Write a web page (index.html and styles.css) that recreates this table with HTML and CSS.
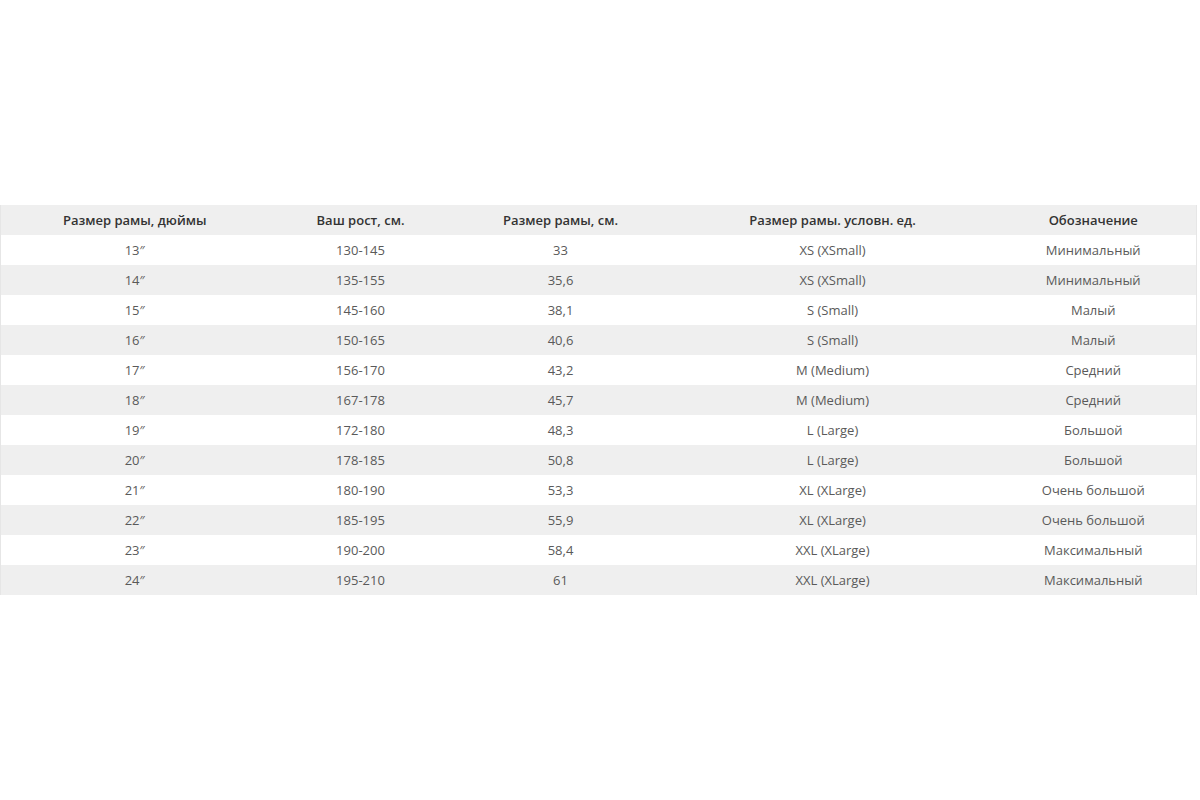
FILE: index.html
```html
<!DOCTYPE html>
<html lang="ru">
<head>
<meta charset="utf-8">
<title>Размеры рамы</title>
<link rel="stylesheet" href="styles.css">
</head>
<body>
<table class="sizes">
  <colgroup>
    <col class="c1"><col class="c2"><col class="c3"><col class="c4"><col class="c5">
  </colgroup>
  <thead>
    <tr><th>Размер рамы, дюймы</th><th>Ваш рост, см.</th><th>Размер рамы, см.</th><th>Размер рамы. условн. ед.</th><th>Обозначение</th></tr>
  </thead>
  <tbody>
    <tr><td>13″</td><td>130-145</td><td>33</td><td>XS (XSmall)</td><td>Минимальный</td></tr>
    <tr><td>14″</td><td>135-155</td><td>35,6</td><td>XS (XSmall)</td><td>Минимальный</td></tr>
    <tr><td>15″</td><td>145-160</td><td>38,1</td><td>S (Small)</td><td>Малый</td></tr>
    <tr><td>16″</td><td>150-165</td><td>40,6</td><td>S (Small)</td><td>Малый</td></tr>
    <tr><td>17″</td><td>156-170</td><td>43,2</td><td>M (Medium)</td><td>Средний</td></tr>
    <tr><td>18″</td><td>167-178</td><td>45,7</td><td>M (Medium)</td><td>Средний</td></tr>
    <tr><td>19″</td><td>172-180</td><td>48,3</td><td>L (Large)</td><td>Большой</td></tr>
    <tr><td>20″</td><td>178-185</td><td>50,8</td><td>L (Large)</td><td>Большой</td></tr>
    <tr><td>21″</td><td>180-190</td><td>53,3</td><td>XL (XLarge)</td><td>Очень большой</td></tr>
    <tr><td>22″</td><td>185-195</td><td>55,9</td><td>XL (XLarge)</td><td>Очень большой</td></tr>
    <tr><td>23″</td><td>190-200</td><td>58,4</td><td>XXL (XLarge)</td><td>Максимальный</td></tr>
    <tr><td>24″</td><td>195-210</td><td>61</td><td>XXL (XLarge)</td><td>Максимальный</td></tr>
  </tbody>
</table>
</body>
</html>
```

FILE: styles.css
```css
html, body {
  margin: 0;
  padding: 0;
  background: #ffffff;
}
body {
  font-family: "Open Sans", "Liberation Sans", sans-serif;
  padding-top: 205px;
}
.sizes {
  width: 1196px;
  margin-left: 0;
  border-collapse: collapse;
  table-layout: fixed;
  border-left: 1px solid #e6e6e6;
  border-right: 1px solid #e6e6e6;
}
.c1 { width: 268px; }
.c2 { width: 184px; }
.c3 { width: 216px; }
.c4 { width: 328px; }
.c5 { width: 200px; }
.sizes th,
.sizes td {
  height: 30px;
  padding: 0;
  text-align: center;
  vertical-align: middle;
  font-size: 13px;
  line-height: 30px;
}
.sizes th:last-child,
.sizes td:last-child {
  padding-right: 6px;
}
.sizes th {
  font-weight: 600;
  color: #333333;
  background: #efefef;
}
.sizes td {
  color: #5a5a5a;
  font-weight: 400;
}
.sizes tbody tr:nth-child(even) td {
  background: #efefef;
}
```
